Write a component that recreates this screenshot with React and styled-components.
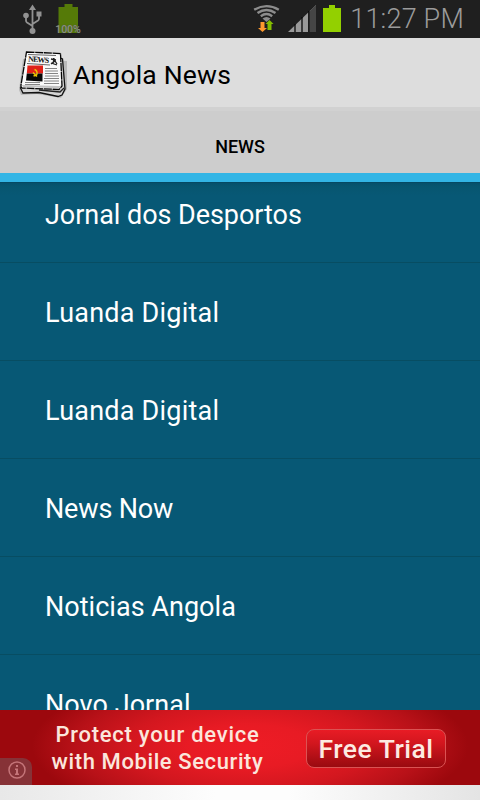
import React from 'react'
import styled, { createGlobalStyle } from 'styled-components'

const GlobalStyle = createGlobalStyle`
  body {
    margin: 0;
    overflow: hidden;
  }
  * {
    box-sizing: border-box;
  }
`

const Container = styled.div`
  width: 480px;
  height: 800px;
  display: flex;
  flex-direction: column;
  overflow: hidden;
  font-family: Roboto, "Liberation Sans", sans-serif;
  background-color: #075875;
`

const StatusBar = styled.div`
  height: 38px;
  flex-shrink: 0;
  display: flex;
  justify-content: space-between;
  padding: 0 16px 0 22px;
  background-color: #1f1f1f;
`

const StatusGroup = styled.div`
  display: flex;
  align-items: flex-start;
`

const StatusIcon = styled.svg`
  display: block;
  flex-shrink: 0;
  margin-left: ${(props) => props.$gap || 0}px;
`

const BatteryLevel = styled.div`
  width: 28px;
  height: 38px;
  margin-left: 10px;
  display: grid;
  justify-items: center;
`

const LevelIcon = styled.svg`
  grid-area: 1 / 1;
`

const LevelText = styled.span`
  grid-area: 1 / 1;
  align-self: end;
  margin-bottom: 3px;
  font-size: 10.5px;
  line-height: 11px;
  font-weight: 500;
  color: #8b9181;
  text-shadow: 0 0 1px #444;
`

const Clock = styled.div`
  margin-left: 9px;
  font-size: 27px;
  line-height: 38px;
  font-weight: 300;
  letter-spacing: 0.2px;
  white-space: nowrap;
  color: #9b9b9b;
`

const ActionBar = styled.div`
  height: 69px;
  flex-shrink: 0;
  display: flex;
  align-items: center;
  padding: 0 15px;
  background-color: #dddddd;
`

const Title = styled.h1`
  margin: 4px 0 0 2px;
  font-size: 26.5px;
  line-height: 32px;
  font-weight: 400;
  letter-spacing: 0.2px;
  white-space: nowrap;
  color: #000;
`

const Tab = styled.div`
  height: 75px;
  flex-shrink: 0;
  padding-top: 25px;
  border-top: 4px solid #d1d1d1;
  border-bottom: 9px solid #33b5e5;
  background-color: #cdcdcd;
  text-align: center;
  font-size: 18px;
  line-height: 22px;
  font-weight: 500;
  color: #000;
`

const List = styled.ul`
  flex: 1;
  min-height: 0;
  margin: 0;
  padding: 0;
  overflow: hidden;
  list-style: none;
  background: linear-gradient(#064259 0, #06506b 1px, #075670 5px, #075875 14px);
`

const Row = styled.li`
  height: 98px;
  padding: 2px 45px 0;
  border-bottom: 1px solid #074d62;
  font-size: 27px;
  line-height: 97px;
  letter-spacing: ${(props) => props.$spacing}px;
  white-space: nowrap;
  color: #fff;

  &:first-child {
    margin-top: -17px;
  }
`

const Ad = styled.div`
  height: 75px;
  flex-shrink: 0;
  display: flex;
  position: relative;
  padding: 11px 34px 0 52px;
  justify-content: space-between;
  background: radial-gradient(ellipse 218px 76px at 250px 36px, #ee1c25 0%, #e81b24 28%, #d3171f 56%, #b81118 80%, #9c080d 100%);
`

const AdText = styled.div`
  width: 211px;
  display: flex;
  flex-direction: column;
  align-items: center;
  font-size: 22px;
  line-height: 27px;
  font-weight: 500;
  white-space: nowrap;
  color: #fbe6dc;
`

const AdLine = styled.div`
  letter-spacing: ${(props) => props.$spacing}px;
`

const AdButton = styled.div`
  width: 140px;
  height: 39px;
  margin-top: 8px;
  border: 1.5px solid #db5353;
  border-radius: 8px;
  background: linear-gradient(#e81c25, #d3161e 35%, #990a10);
  text-align: center;
  font-size: 26.5px;
  line-height: 38px;
  font-weight: 500;
  letter-spacing: 0.5px;
  white-space: nowrap;
  color: #fdeae2;
`

const InfoBadge = styled.div`
  position: absolute;
  left: 0;
  bottom: 0;
  width: 32px;
  height: 27px;
  padding: 3px 0 0 8px;
  border-top-right-radius: 9px;
  background-color: #863237;
`

const Footer = styled.div`
  height: 15px;
  flex-shrink: 0;
  background: linear-gradient(90deg, #e8e8e8, #fdfdfd 45%, #fdfdfd 60%, #e4e4e4);
`

const Usb = () => (
  <StatusIcon width="22" height="38" viewBox="0 0 22 38" fill="none" stroke="#929292" strokeWidth="1.8">
    <path d="M10.5 9v22M10.5 26L5 22.5q-1-.7-1-2V16M10.5 24l5.5-3.5q1-.7 1-2V15" />
    <path d="M10.5 4.5L14 10H7z" fill="#929292" stroke="none" />
    <circle cx="4" cy="15.5" r="2.8" fill="#929292" stroke="none" />
    <path d="M14.5 11.5h5v5h-5z" fill="#929292" stroke="none" />
    <circle cx="10.5" cy="31" r="3" fill="#929292" stroke="none" />
  </StatusIcon>
)

const Wifi = () => (
  <StatusIcon width="28" height="38" viewBox="0 0 28 38" fill="none">
    <g stroke="#8d8d8d" strokeWidth="2.4">
      <path d="M1.2 9.7Q13.5 2.500 25.800 9.700" />
      <path d="M4.500 13Q13.500 7 22.500 13" />
      <path d="M7.800 16.200Q13.500 12 19.200 16.200" />
    </g>
    <path d="M9.500 18.500Q13.500 15.300 17.500 18.500L13.500 22z" fill="#8d8d8d" />
    <path d="M7.500 22h4v6h2.500L9.500 32 5 28h2.500z" fill="#ff9a2e" />
    <path d="M14.500 30v-6H12.500L16.500 20l4 4h-2v6z" fill="#85bf00" />
  </StatusIcon>
)

const Signal = () => (
  <StatusIcon $gap={7} width="29" height="38" viewBox="0 0 29 38">
    <path d="M0 32L28 5v27z" fill="#9a9a9a" />
    <path d="M21 11.800L28 5v27h-7z" fill="#454545" />
    <path d="M7 24v8M14 17v15M20.800 11v21" stroke="#080808" strokeWidth="1.3" />
  </StatusIcon>
)

const Battery = () => (
  <StatusIcon $gap={6} width="18" height="38" viewBox="0 0 18 38">
    <path d="M0 8h6V5h6v3h6v24H0z" fill="#93d000" />
  </StatusIcon>
)

const Newspaper = () => (
  <svg width="56" height="56" viewBox="0 0 56 56">
    <path d="M8 14L4 45l2 5 16-1 24 4 6-9V16z" fill="#000" opacity=".16" />
    <path d="M43 12l4.500 2 2.500 30-3 6-4 1.500-19-4-16 .500-2.500-5z" fill="#d4d4d4" stroke="#111" strokeWidth="1.3" />
    <path d="M24 45l21 2 4-4" fill="none" stroke="#222" strokeWidth="1.4" />
    <path d="M11.500 7L45.500 8.500 47 41l-3 3.500-37-1.500q-1.500-1-1-3z" fill="#fafafa" stroke="#050505" strokeWidth="1.3" strokeDasharray="8 .7" />
    <path d="M6.800 40l38 1 1.500-1-2 3.200-36-1.200z" fill="#c3c3c3" />
    <text x="13" y="16.500" transform="rotate(4 13 16)" textLength="21" fontFamily="Liberation Serif, serif" fontSize="8" fontWeight="700" fill="#111">NEWS</text>
    <path d="M13 9.500l28 1M12 18.500l23 1.500" stroke="#444" strokeWidth=".8" />
    <path d="M36 14l5 1M36 18l6 2M39 13l-1 6M36 19l4-3 2 3" fill="none" stroke="#222" strokeWidth="1.3" />
    <path d="M12.500 20.500H28V28.500H11.800z" fill="#df2118" />
    <path d="M11.800 28.500H27.500V36.500L11 35.500z" fill="#070707" />
    <path d="M19.500 24.500q3 1 2.500 4.500-1 2.500-3.500 1.500M18 27.500l4 4" fill="none" stroke="#efc500" strokeWidth="1.4" />
    <path d="M30 23.500h12M30 26h13M30 28.500h13M30 31h14M29 33.500h15M29 36h15M29 38.500h15M10 37.500h15M10 39.500h15" stroke="#777" strokeWidth=".9" />
  </svg>
)

const noticias = [
  { nome: 'Jornal dos Desportos', spacing: -0.05 },
  { nome: 'Luanda Digital', spacing: 0.22 },
  { nome: 'Luanda Digital', spacing: 0.22 },
  { nome: 'News Now', spacing: -0.15 },
  { nome: 'Noticias Angola', spacing: 0.03 },
  { nome: 'Novo Jornal', spacing: 0.05 },
]

export class App extends React.Component {
  listaDeNoticias = () => noticias.map((noticia, index) => (
    <Row key={index} $spacing={noticia.spacing}>{noticia.nome}</Row>
  ))

  render() {
    return (
      <Container>
        <GlobalStyle />
        <StatusBar>
          <StatusGroup>
            <Usb />
            <BatteryLevel>
              <LevelIcon width="20" height="38" viewBox="0 0 20 38">
                <path d="M.5 7h6V4h8v3H20v26H.5z" fill="#557a08" />
              </LevelIcon>
              <LevelText>100%</LevelText>
            </BatteryLevel>
          </StatusGroup>
          <StatusGroup>
            <Wifi />
            <Signal />
            <Battery />
            <Clock>11:27 PM</Clock>
          </StatusGroup>
        </StatusBar>
        <ActionBar>
          <Newspaper />
          <Title>Angola News</Title>
        </ActionBar>
        <Tab>NEWS</Tab>
        <List>{this.listaDeNoticias()}</List>
        <Ad>
          <AdText>
            <AdLine $spacing={0.75}>Protect your device</AdLine>
            <AdLine $spacing={0.6}>with Mobile Security</AdLine>
          </AdText>
          <AdButton>Free Trial</AdButton>
          <InfoBadge>
            <svg width="18" height="18" viewBox="0 0 18 18">
              <circle cx="9" cy="9" r="8" fill="none" stroke="#c57579" strokeWidth="1.5" />
              <path d="M8 4h2v2H8zM7 7.500h3V13H8V9H7zM7 12.500h4V14H7z" fill="#c57579" />
            </svg>
          </InfoBadge>
        </Ad>
        <Footer />
      </Container>
    )
  }
}

export default App
